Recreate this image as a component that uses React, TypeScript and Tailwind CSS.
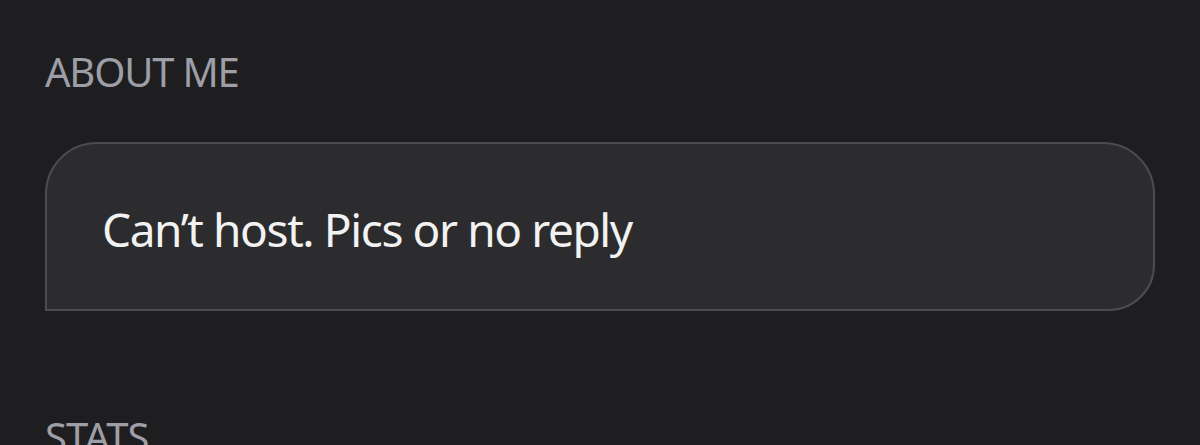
export default function App() {
  return (
    <div className="w-[1200px] h-[445px] overflow-hidden bg-[#1e1e20] pl-[45px] pr-[45px] pt-[48px]" style={{ fontFamily: '"Noto Sans", "Open Sans", sans-serif' }}>
      <div className="text-[40px] leading-[48px] text-[#9e9ea6] tracking-[-1.2px]">ABOUT ME</div>
      <div className="mt-[46px] h-[169px] w-[1110px] flex items-center border-2 border-[#4c4c50] bg-[#2c2c2e] rounded-tl-[52px] rounded-tr-[52px] rounded-br-[46px] rounded-bl-none pl-[55px]">
        <span className="text-[46px] text-[#f2f2f2] leading-none pt-[4px] tracking-[-1.4px]">Can’t host. Pics or no reply</span>
      </div>
      <div className="mt-[102px] text-[40px] leading-[48px] text-[#9e9ea6] tracking-[-1px]">STATS</div>
    </div>
  );
}
